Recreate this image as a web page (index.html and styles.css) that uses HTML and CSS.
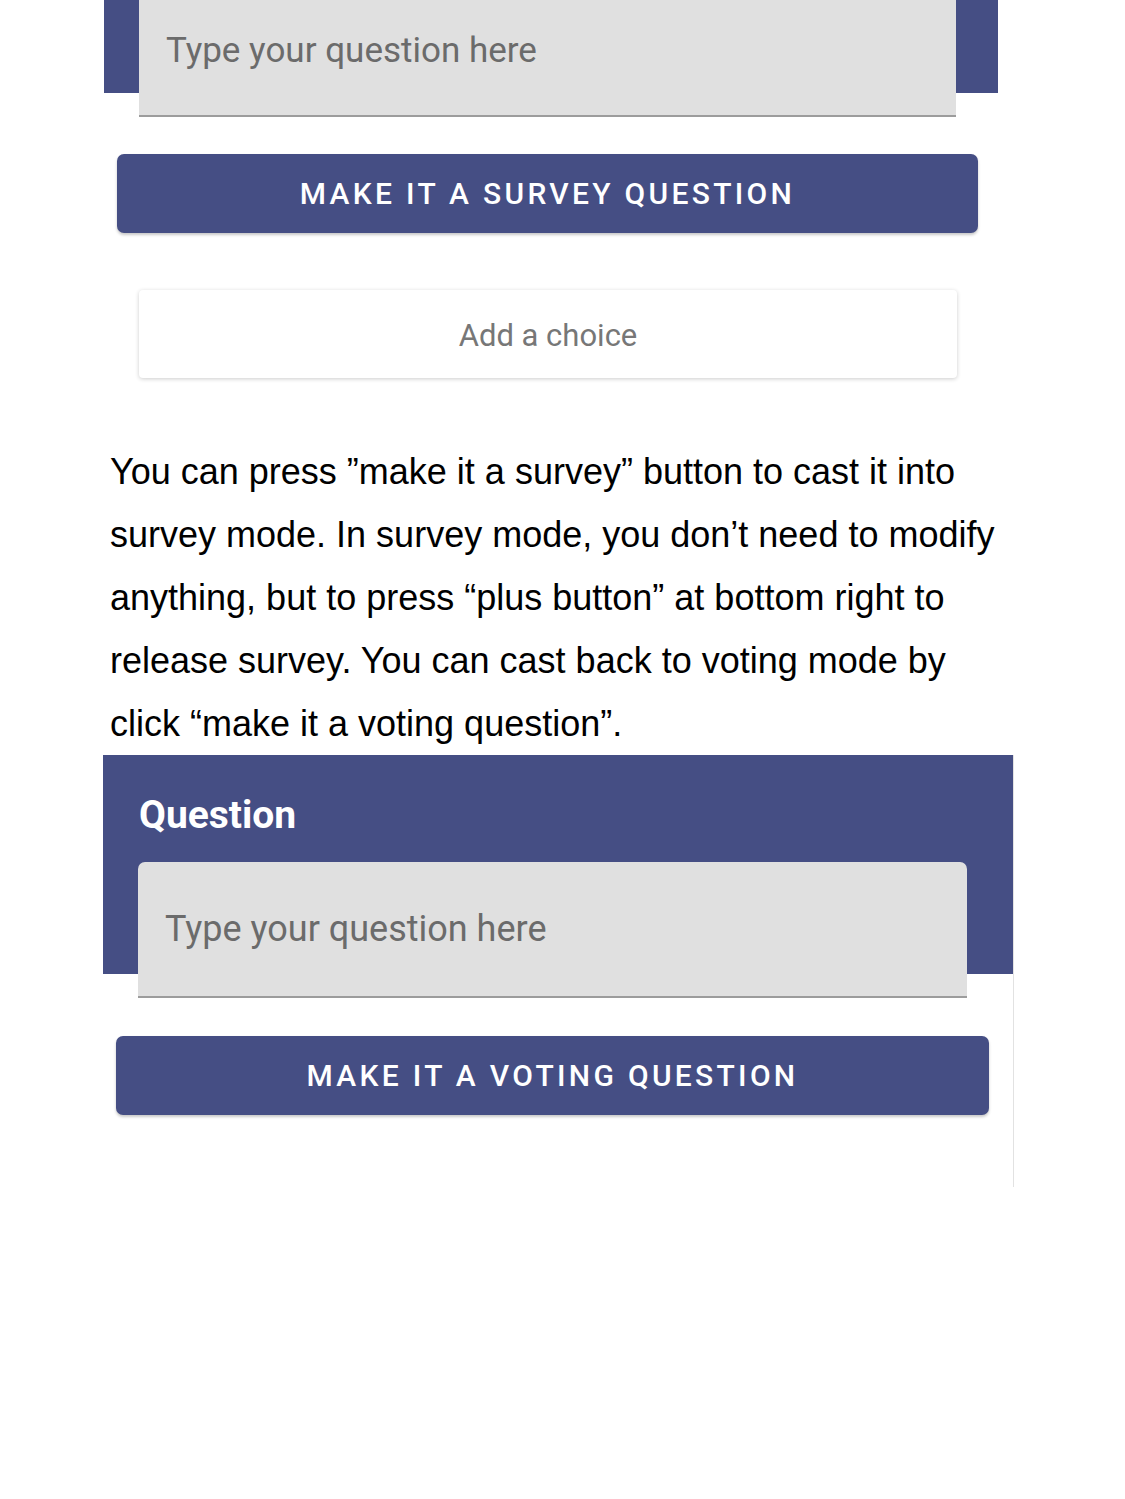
FILE: index.html
```html
<!DOCTYPE html>
<html>
<head>
<meta charset="utf-8">
<link rel="stylesheet" href="styles.css">
</head>
<body>
<div class="page">
  <section class="shot shot-survey">
    <div class="field field-top">Type your question here</div>
    <button class="action action-survey">MAKE IT A SURVEY QUESTION</button>
    <div class="choice">Add a choice</div>
  </section>

  <p class="doc-text">You can press ”make it a survey” button to cast it into survey mode. In survey mode, you don’t need to modify anything, but to press “plus button” at bottom right to release survey. You can cast back to voting mode by click “make it a voting question”.</p>

  <section class="shot shot-voting">
    <h2 class="label">Question</h2>
    <div class="field field-rounded">Type your question here</div>
    <button class="action action-voting">MAKE IT A VOTING QUESTION</button>
  </section>
</div>
</body>
</html>
```

FILE: styles.css
```css
html, body {
  margin: 0;
  padding: 0;
  background: #ffffff;
}

.page {
  width: 1125px;
  height: 1499px;
  display: flex;
  flex-direction: column;
}

.shot {
  display: flex;
  flex-direction: column;
  align-items: flex-start;
  font-family: Roboto, "Noto Sans", sans-serif;
}

.shot-survey {
  margin-left: 104px;
  width: 894px;
  background: linear-gradient(to bottom, #454e84 0, #454e84 93px, #ffffff 93px);
}

.field {
  box-sizing: border-box;
  background: #e0e0e0;
  border-bottom: 2px solid #9c9c9c;
  color: #6b6b6b;
  font-size: 35px;
  line-height: 41px;
  padding-left: 27px;
  margin-left: 35px;
}

.field-top {
  width: 817px;
  height: 117px;
  padding-top: 30px;
}

.action {
  box-sizing: border-box;
  height: 79px;
  border: none;
  border-radius: 7px;
  background: #454e84;
  color: #ffffff;
  font-family: Roboto, "Noto Sans", sans-serif;
  font-weight: 500;
  font-size: 30px;
  letter-spacing: 3.3px;
  padding: 0;
  margin-left: 13px;
  box-shadow: 0 2px 3px rgba(0, 0, 0, 0.22);
}

.action-survey {
  width: 861px;
  margin-top: 37px;
}

.choice {
  box-sizing: border-box;
  width: 818px;
  height: 88px;
  margin-top: 57px;
  margin-left: 35px;
  padding-top: 2px;
  background: #ffffff;
  border-radius: 4px;
  box-shadow: 0 1px 4px rgba(0, 0, 0, 0.2);
  color: #777777;
  font-size: 31px;
  display: flex;
  align-items: center;
  justify-content: center;
}

.doc-text {
  margin: 62px 0 0 110px;
  width: 895px;
  font-family: "Liberation Sans", Arial, sans-serif;
  font-size: 36px;
  line-height: 63px;
  color: #000000;
}

.shot-voting {
  margin-left: 103px;
  margin-top: 0;
  width: 910px;
  height: 432px;
  border-right: 1px solid #e2e2e2;
  background: linear-gradient(to bottom, #454e84 0, #454e84 219px, #ffffff 219px);
}

.label {
  margin: 38px 0 0 36px;
  color: #ffffff;
  font-size: 39px;
  font-weight: 700;
  line-height: 44px;
}

.field-rounded {
  width: 829px;
  height: 136px;
  margin-top: 25px;
  border-radius: 7px 7px 0 0;
  padding-top: 47px;
  font-size: 36px;
}

.action-voting {
  width: 873px;
  margin-top: 38px;
}
```
